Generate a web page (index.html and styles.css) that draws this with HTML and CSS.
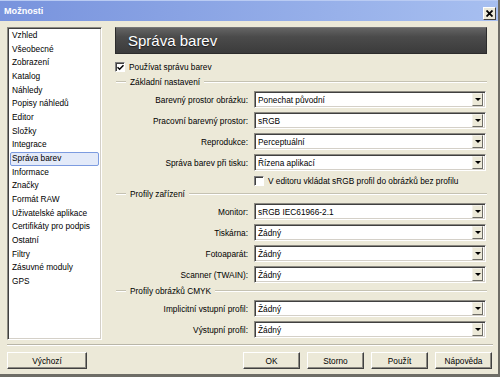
FILE: index.html
```html
<!DOCTYPE html>
<html lang="cs">
<head>
<meta charset="utf-8">
<title>Možnosti</title>
<link rel="stylesheet" href="styles.css">
</head>
<body>
<div class="window">
  <div class="titlebar">
    <span class="title">Možnosti</span>
    <span class="close"><svg width="7" height="7" viewBox="0 0 7 7"><path d="M0.5 0.5 L6.5 6.5 M6.5 0.5 L0.5 6.5" stroke="#000" stroke-width="1.8"/></svg></span>
  </div>
  <div class="content">
    <div class="main">
      <ul class="list">
        <li>Vzhled</li>
        <li>Všeobecné</li>
        <li>Zobrazení</li>
        <li>Katalog</li>
        <li>Náhledy</li>
        <li>Popisy náhledů</li>
        <li>Editor</li>
        <li>Složky</li>
        <li>Integrace</li>
        <li class="sel">Správa barev</li>
        <li>Informace</li>
        <li>Značky</li>
        <li>Formát RAW</li>
        <li>Uživatelské aplikace</li>
        <li>Certifikáty pro podpis</li>
        <li>Ostatní</li>
        <li>Filtry</li>
        <li>Zásuvné moduly</li>
        <li>GPS</li>
      </ul>
      <div class="panel">
        <div class="header">Správa barev</div>
        <div class="check first"><span class="box"><svg width="7" height="7" viewBox="0 0 7 7"><path d="M0.5 3.2 L2.6 5.3 L6.5 1.2" fill="none" stroke="#000" stroke-width="1.5"/></svg></span>Používat správu barev</div>
        <div class="group g1"><span class="gtitle">Základní nastavení</span></div>
        <div class="rows">
          <span class="lbl">Barevný prostor obrázku:</span><div class="combo"><span class="val">Ponechat původní</span><span class="arrow"></span></div>
          <span class="lbl">Pracovní barevný prostor:</span><div class="combo"><span class="val">sRGB</span><span class="arrow"></span></div>
          <span class="lbl">Reprodukce:</span><div class="combo"><span class="val">Perceptuální</span><span class="arrow"></span></div>
          <span class="lbl">Správa barev při tisku:</span><div class="combo"><span class="val">Řízena aplikací</span><span class="arrow"></span></div>
        </div>
        <div class="check second"><span class="box"></span>V editoru vkládat sRGB profil do obrázků bez profilu</div>
        <div class="group g2"><span class="gtitle">Profily zařízení</span></div>
        <div class="rows">
          <span class="lbl">Monitor:</span><div class="combo"><span class="val">sRGB IEC61966-2.1</span><span class="arrow"></span></div>
          <span class="lbl">Tiskárna:</span><div class="combo"><span class="val">Žádný</span><span class="arrow"></span></div>
          <span class="lbl">Fotoaparát:</span><div class="combo"><span class="val">Žádný</span><span class="arrow"></span></div>
          <span class="lbl">Scanner (TWAIN):</span><div class="combo"><span class="val">Žádný</span><span class="arrow"></span></div>
        </div>
        <div class="group g3"><span class="gtitle">Profily obrázků CMYK</span></div>
        <div class="rows">
          <span class="lbl">Implicitní vstupní profil:</span><div class="combo"><span class="val">Žádný</span><span class="arrow"></span></div>
          <span class="lbl">Výstupní profil:</span><div class="combo"><span class="val">Žádný</span><span class="arrow"></span></div>
        </div>
      </div>
    </div>
    <div class="sep"></div>
    <div class="buttons">
      <span class="btn wide">Výchozí</span>
      <span class="spacer"></span>
      <span class="btn">OK</span>
      <span class="btn">Storno</span>
      <span class="btn">Použít</span>
      <span class="btn">Nápověda</span>
    </div>
  </div>
</div>
</body>
</html>
```
FILE: styles.css
```css
* { box-sizing: border-box; }
html, body { margin: 0; padding: 0; }
body {
  width: 500px;
  height: 377px;
  overflow: hidden;
  background: #ece9d8;
  font-family: "Liberation Sans", Arial, sans-serif;
  font-size: 8.3px;
  color: #000;
}
.window {
  width: 500px;
  height: 377px;
  display: flex;
  flex-direction: column;
  background: #ece9d8;
  border-right: 2px solid #6e6d66;
  border-bottom: 3px solid #6e6d66;
}
.titlebar {
  height: 21px;
  flex: none;
  display: flex;
  align-items: center;
  justify-content: space-between;
  padding: 0 2px 0 4px;
  background: linear-gradient(to right, #7893dd, #a7bff0);
  border-top: 1px solid #b9cbf3;
}
.title {
  color: #fff;
  font-weight: bold;
  font-size: 9.1px;
}
.close {
  width: 13px;
  height: 13px;
  margin-top: 4px;
  display: flex;
  align-items: center;
  justify-content: center;
  background: #ece9d8;
  border-top: 1px solid #fff;
  border-left: 1px solid #fff;
  border-right: 1px solid #404040;
  border-bottom: 1px solid #404040;
}
.content {
  flex: 1;
  display: flex;
  flex-direction: column;
  padding: 6px 0 0 7px;
}
.main {
  display: flex;
  gap: 13px;
  height: 313px;
}
.list {
  list-style: none;
  margin: 0;
  padding: 0 1px;
  width: 95px;
  height: 313px;
  background: #fff;
  border-top: 1px solid #8c8a82;
  border-left: 1px solid #8c8a82;
  border-right: 1px solid #fff;
  border-bottom: 1px solid #fff;
  box-shadow: inset 1px 1px 0 #404040, inset -1px -1px 0 #d4d0c8;
  padding-top: 1px;
  padding-left: 2px;
}
.list li {
  height: 13.67px;
  line-height: 13.67px;
  padding-left: 2px;
  white-space: nowrap;
}
.list li.sel {
  background: #e3eaf9;
  border: 1px solid #7c9be0;
  border-radius: 2px;
  line-height: 11.67px;
  padding-left: 1px;
  margin-right: 1px;
}
.panel {
  width: 372px;
  display: flex;
  flex-direction: column;
}
.header {
  height: 27px;
  flex: none;
  display: flex;
  align-items: center;
  padding-left: 12px;
  font-size: 15px;
  color: #fff;
  text-shadow: 0 1px 1px #1a1a1a;
  background: linear-gradient(to bottom, #646464 0%, #4b4b4b 35%, #3b3b3b 100%);
  border: 1px solid #2c2c2c;
  border-top-color: #777;
}
.check {
  display: flex;
  align-items: center;
  height: 12px;
  white-space: nowrap;
}
.check.first { margin-top: 7px; }
.check.second { margin: 4px 0 0 139px; }
.box {
  width: 10px;
  height: 10px;
  margin-right: 4px;
  flex: none;
  background: #fff;
  border-top: 1px solid #808080;
  border-left: 1px solid #808080;
  border-right: 1px solid #fff;
  border-bottom: 1px solid #fff;
  box-shadow: inset 1px 1px 0 #404040;
  display: flex;
  align-items: center;
  justify-content: center;
}
.group {
  height: 12px;
  display: flex;
  align-items: center;
  gap: 4px;
  padding-left: 1px;
}
.group::before {
  content: "";
  width: 10px;
  border-top: 1px solid #c5c2b2;
  border-bottom: 1px solid #fff;
}
.group::after {
  content: "";
  flex: 1;
  border-top: 1px solid #c5c2b2;
  border-bottom: 1px solid #fff;
}
.gtitle { white-space: nowrap; }
.g1 { margin-top: 3px; }
.g2 { margin-top: 1px; }
.g3 { margin-top: 2px; }
.rows {
  display: grid;
  grid-template-columns: 133px 232px;
  column-gap: 6px;
  row-gap: 4px;
  margin-top: 3px;
}
.lbl {
  text-align: right;
  align-self: center;
  white-space: nowrap;
}
.combo {
  height: 17px;
  display: flex;
  align-items: center;
  justify-content: space-between;
  background: #fff;
  border-top: 1px solid #8c8a82;
  border-left: 1px solid #8c8a82;
  border-right: 1px solid #fff;
  border-bottom: 1px solid #fff;
  box-shadow: inset 1px 1px 0 #404040, inset -1px -1px 0 #d4d0c8;
  padding: 2px 2px 2px 3px;
}
.val { white-space: nowrap; }
.arrow {
  width: 11px;
  height: 13px;
  flex: none;
  display: flex;
  align-items: center;
  justify-content: center;
  background: #ece9d8;
  border-top: 1px solid #f4f2ea;
  border-left: 1px solid #f4f2ea;
  border-right: 1px solid #6e6d66;
  border-bottom: 1px solid #6e6d66;
}
.arrow::after {
  content: "";
  width: 0;
  height: 0;
  border-left: 3px solid transparent;
  border-right: 3px solid transparent;
  border-top: 3px solid #000;
}
.sep {
  margin-top: 4px;
  width: 486px;
  border-top: 1px solid #b9b6a8;
  border-bottom: 1px solid #fff;
}
.buttons {
  display: flex;
  gap: 7px;
  margin-top: 6px;
  width: 485px;
}
.spacer { flex: 1; }
.btn {
  width: 57px;
  height: 17px;
  display: flex;
  align-items: center;
  justify-content: center;
  background: #ece9d8;
  border-top: 1px solid #fff;
  border-left: 1px solid #fff;
  border-right: 1px solid #404040;
  border-bottom: 1px solid #404040;
  box-shadow: inset -1px -1px 0 #8c8a82;
}
.btn.wide { width: 80px; }
```
